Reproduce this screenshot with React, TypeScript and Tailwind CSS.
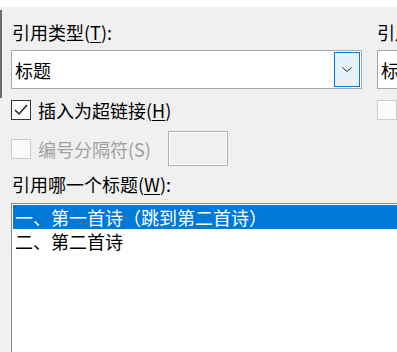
import React from "react";

function Checkbox({ checked, disabled }: { checked?: boolean; disabled?: boolean }) {
  return (
    <div
      className={`flex h-[20px] w-[20px] shrink-0 items-center justify-center border ${
        disabled ? "border-[#cccccc] bg-[#fbfbfb]" : "border-[#333333] bg-white"
      }`}
    >
      {checked && (
        <svg width="18" height="18" viewBox="0 0 18 18" fill="none">
          <polyline points="3,9 7,13 15,4" stroke="#222" strokeWidth="1.5" />
        </svg>
      )}
    </div>
  );
}

function Combo({ value, button }: { value: string; button?: boolean }) {
  return (
    <div className="flex h-[39px] items-stretch border border-[#a9a9a9] bg-white p-[1px]">
      <div className="flex flex-1 items-center whitespace-nowrap pl-[2px]">{value}</div>
      {button && (
        <div className="flex w-[26px] items-center justify-center border border-[#0078d7] bg-[#e5f1fb]">
          <svg width="10" height="5" viewBox="0 0 10 5" fill="none">
            <polyline points="0.5,0.5 5,4.5 9.5,0.5" stroke="#2b2b2b" strokeWidth="1" />
          </svg>
        </div>
      )}
    </div>
  );
}

export default function App() {
  return (
    <div className="relative h-[352px] w-[397px] overflow-hidden bg-[#f0f0f0] font-['Noto_Sans_CJK_SC','Microsoft_YaHei',sans-serif] text-[18px] leading-[24px] text-black">
      <div className="h-[7px] bg-white" />
      <div className="flex">
        <div className="flex w-[2px] shrink-0 flex-col">
          <div className="h-[3px]" />
          <div className="h-[88px] bg-[#6b6b6b]" />
        </div>
        <div className="min-w-0 flex-1 pl-[9px]">
          <div className="flex gap-[15px] pt-[13px]">
            <div className="flex w-[351px] shrink-0 flex-col">
              <div className="h-[24px] whitespace-nowrap pl-[1px]">
                引用类型(<span className="underline underline-offset-2">T</span>):
              </div>
              <div className="mt-[6px]">
                <Combo value="标题" button />
              </div>
              <div className="mt-[11px] flex h-[20px] items-center gap-[7px] whitespace-nowrap">
                <Checkbox checked />
                <span>
                  插入为超链接(<span className="underline underline-offset-2">H</span>)
                </span>
              </div>
            </div>
            <div className="flex w-[200px] shrink-0 flex-col">
              <div className="h-[24px] whitespace-nowrap">
                引用内容(<span className="underline underline-offset-2">R</span>):
              </div>
              <div className="mt-[6px]">
                <Combo value="标题文字" />
              </div>
              <div className="mt-[11px] flex h-[20px] items-center gap-[7px] whitespace-nowrap">
                <Checkbox disabled />
                <span className="text-[#a0a0a0]">包括“见上方”/“见下方”(N)</span>
              </div>
            </div>
          </div>

          <div className="mt-[11px] flex h-[35px] items-center">
            <div className="flex w-[157px] items-center gap-[7px] whitespace-nowrap">
              <Checkbox disabled />
              <span className="text-[#a0a0a0]">编号分隔符(S)</span>
            </div>
            <div className="h-[35px] w-[60px] border border-[#adadb4] bg-[#f0f0f0] shadow-[inset_0_0_0_1px_#ffffff]" />
          </div>

          <div className="mt-[6px] h-[24px] whitespace-nowrap pl-[1px]">
            引用哪一个标题(<span className="underline underline-offset-2">W</span>):
          </div>

          <div className="mt-[7px] h-[170px] w-[420px] border border-[#828790] bg-white p-[1px]">
            <div className="h-[24px] whitespace-nowrap bg-[#0078d7] pl-[2px] text-white">
              一、第一首诗（跳到第二首诗）
            </div>
            <div className="h-[24px] whitespace-nowrap pl-[2px]">二、第二首诗</div>
          </div>
        </div>
      </div>
    </div>
  );
}
